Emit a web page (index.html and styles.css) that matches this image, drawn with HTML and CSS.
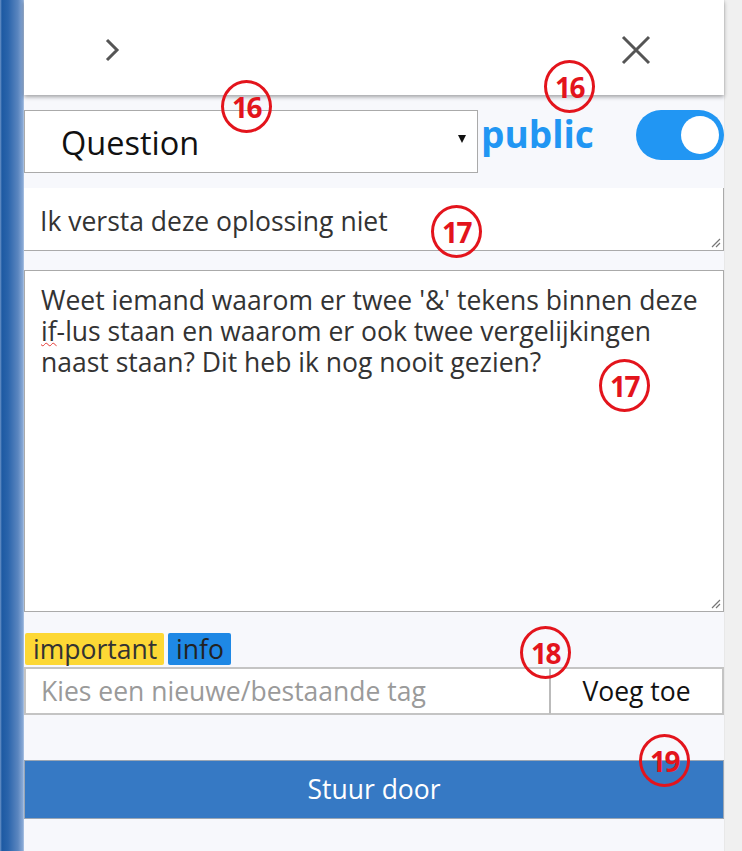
FILE: index.html
```html
<!DOCTYPE html>
<html lang="nl">
<head>
<meta charset="utf-8">
<title>Vraag stellen</title>
<link rel="stylesheet" href="styles.css">
</head>
<body>
<div class="app">
  <div class="sidebar"></div>
  <main class="panel">
    <header class="topbar">
      <svg class="icon chevron" width="16" height="24" viewBox="0 0 16 24"><path d="M3 2 L13 12 L3 22" fill="none" stroke="#555" stroke-width="3"/></svg>
      <svg class="icon close" width="30" height="30" viewBox="0 0 30 30"><path d="M2 2 L28 28 M28 2 L2 28" fill="none" stroke="#555" stroke-width="3"/></svg>
    </header>

    <div class="row-type">
      <div class="select">
        <span class="select-text">Question</span>
        <span class="select-arrow"></span>
      </div>
      <span class="public">public</span>
      <div class="toggle"><span class="knob"></span></div>
    </div>

    <div class="field title-field">
      <span>Ik versta deze oplossing niet</span>
      <svg class="grip" width="10" height="10" viewBox="0 0 10 10"><path d="M9 1 L1 9 M9 5 L5 9" stroke="#777" stroke-width="1.2"/></svg>
    </div>

    <div class="field body-field">
      <p>Weet iemand waarom er twee '&amp;' tekens binnen deze <span class="typo">if</span>-lus staan en waarom er ook twee vergelijkingen naast staan? Dit heb ik nog nooit gezien?</p>
      <svg class="grip" width="10" height="10" viewBox="0 0 10 10"><path d="M9 1 L1 9 M9 5 L5 9" stroke="#777" stroke-width="1.2"/></svg>
    </div>

    <div class="tags">
      <span class="tag tag-important">important</span>
      <span class="tag tag-info">info</span>
    </div>

    <div class="tag-row">
      <div class="tag-input">Kies een nieuwe/bestaande tag</div>
      <div class="tag-add">Voeg toe</div>
    </div>

    <div class="submit">Stuur door</div>
  </main>
  <div class="scrollbar"></div>
</div>

<div class="mark m1">16</div>
<div class="mark m2">16</div>
<div class="mark m3">17</div>
<div class="mark m4">17</div>
<div class="mark m5">18</div>
<div class="mark m6">19</div>
</body>
</html>
```

FILE: styles.css
```css
* { box-sizing: border-box; }
html, body { margin: 0; padding: 0; }
body {
  width: 742px;
  height: 851px;
  overflow: hidden;
  font-family: "Open Sans", "Noto Sans", sans-serif;
  color: #333;
  position: relative;
}
.app {
  display: flex;
  height: 851px;
}
.sidebar {
  width: 24px;
  flex: none;
  background: linear-gradient(to right, #6e95c8 0, #1d5aa3 2px, #2a64ab 8px, #5b86bf 18px, #8aaad6 23px, #b9cde8 24px);
}
.panel {
  width: 700px;
  flex: none;
  background: #f7f8fc;
  display: flex;
  flex-direction: column;
}
.scrollbar {
  flex: 1;
  background: #f0f0f0;
  border-left: 1px solid #e8e8e8;
}

.topbar {
  height: 95px;
  background: #fff;
  box-shadow: 0 2px 4px rgba(0,0,0,0.35);
  display: flex;
  align-items: center;
  justify-content: space-between;
  padding: 4px 73px 0 80px;
  position: relative;
  z-index: 1;
}
.icon { display: block; }

.row-type {
  margin-top: 15px;
  display: flex;
  align-items: flex-start;
  height: 63px;
}
.select {
  width: 454px;
  height: 63px;
  background: #fff;
  border: 1px solid #aaa;
  display: flex;
  align-items: center;
  justify-content: space-between;
  padding: 0 11px 0 36px;
}
.select-text {
  font-size: 32.5px;
  color: #111;
  margin-top: 2px;
}
.select-arrow {
  width: 0; height: 0;
  border-left: 4px solid transparent;
  border-right: 4px solid transparent;
  border-top: 8px solid #111;
  margin-top: -6px;
}
.public {
  margin-left: 3px;
  font-weight: 700;
  font-size: 37px;
  line-height: 50px;
  color: #2196f3;
  margin-top: -1px;
}
.toggle {
  margin-left: auto;
  width: 88px;
  height: 50px;
  border-radius: 25px;
  background: #2196f3;
  display: flex;
  align-items: center;
  justify-content: flex-end;
  padding-right: 5px;
}
.knob {
  width: 38px;
  height: 38px;
  border-radius: 50%;
  background: #fff;
}

.field {
  background: #fff;
  position: relative;
}
.grip {
  position: absolute;
  right: 2px;
  bottom: 2px;
}
.title-field {
  margin-top: 15px;
  height: 63px;
  border-right: 1px solid #aaa;
  border-bottom: 1px solid #aaa;
  display: flex;
  align-items: center;
  padding: 3px 0 0 16px;
  font-size: 26.5px;
  color: #333;
}
.body-field {
  margin-top: 19px;
  height: 342px;
  border: 1px solid #aaa;
  padding: 14px 10px 0 16px;
}
.body-field p {
  margin: 0;
  font-size: 26.5px;
  line-height: 31px;
  color: #333;
}
.typo {
  text-decoration: underline wavy #e53935;
  text-decoration-thickness: 1px;
  text-underline-offset: 1px;
  text-decoration-skip-ink: none;
}

.tags {
  margin-top: 21px;
  display: flex;
  gap: 4px;
  padding-left: 1px;
}
.tag {
  height: 32px;
  line-height: 32px;
  font-size: 26.5px;
  padding: 0 7px 0 8px;
  border-radius: 2px;
  color: #333;
}
.tag-important { background: #fdd835; }
.tag-info { background: #1e88e5; color: #222; }

.tag-row {
  margin-top: 2px;
  display: flex;
  height: 48px;
}
.tag-input {
  width: 526px;
  background: #fff;
  border: 2px solid #c4c4c4;
  border-right: 1px solid #bbb;
  display: flex;
  align-items: center;
  padding-left: 15px;
  font-size: 26.5px;
  color: #9a9a9a;
}
.tag-add {
  flex: 1;
  background: #fff;
  border: 2px solid #c4c4c4;
  border-left: 1px solid #bbb;
  display: flex;
  align-items: center;
  justify-content: center;
  font-size: 26.5px;
  color: #111;
}

.submit {
  margin-top: 45px;
  height: 59px;
  background: #3679c4;
  border: 1px solid #9aa6b4;
  color: #fff;
  font-size: 26.5px;
  display: flex;
  align-items: center;
  justify-content: center;
  padding-bottom: 2px;
}

.mark {
  position: absolute;
  width: 51px;
  height: 53px;
  border: 3px solid #e3141c;
  border-radius: 50%;
  color: #e3141c;
  font-family: "Open Sans", "Liberation Sans", sans-serif;
  font-weight: 700;
  font-size: 28px;
  letter-spacing: -1.5px;
  display: flex;
  align-items: center;
  justify-content: center;
  z-index: 5;
}
.m1 { left: 221px; top: 80px; }
.m2 { left: 544px; top: 60px; }
.m3 { left: 431px; top: 205px; }
.m4 { left: 599px; top: 359px; }
.m5 { left: 520px; top: 626px; }
.m6 { left: 639px; top: 734px; }
```
